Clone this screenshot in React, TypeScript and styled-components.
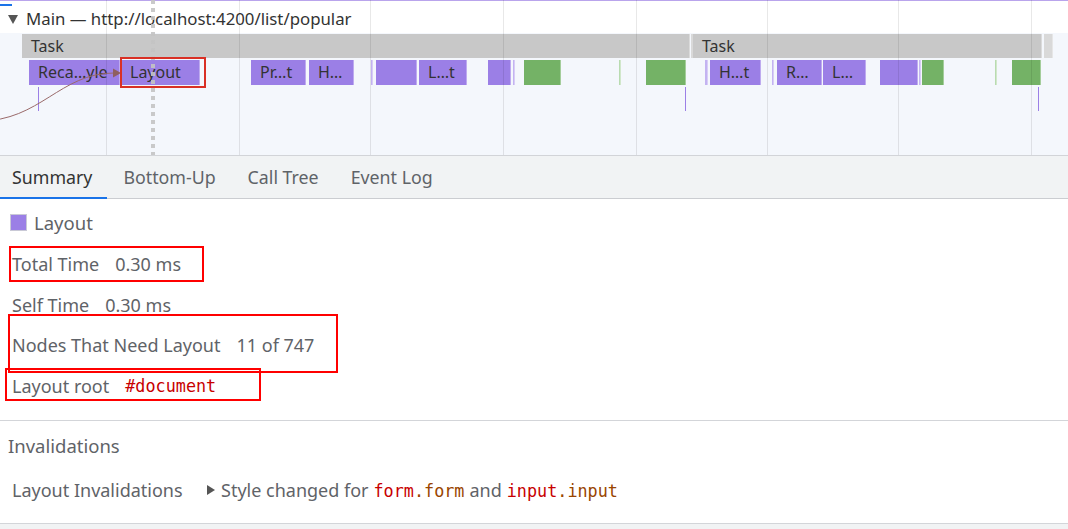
import React from 'react';
import styled, { createGlobalStyle } from 'styled-components';

const PURPLE = '#9b7fe6';
const PURPLE_LIGHT = '#c3b3f1';
const GREEN = '#74b266';
const GREEN_LIGHT = '#b8dbb0';

type Slice = { left: number; width: number; color: string; label?: string };

const slices: Slice[] = [
  { left: 29, width: 91, color: PURPLE, label: 'Reca…yle' },
  { left: 121, width: 79, color: PURPLE, label: 'Layout' },
  { left: 251, width: 55, color: PURPLE, label: 'Pr…t' },
  { left: 309, width: 45, color: PURPLE, label: 'H…' },
  { left: 371, width: 2, color: PURPLE_LIGHT },
  { left: 376, width: 41, color: PURPLE },
  { left: 419, width: 48, color: PURPLE, label: 'L…t' },
  { left: 488, width: 23, color: PURPLE },
  { left: 513, width: 2, color: PURPLE_LIGHT },
  { left: 524, width: 37, color: GREEN },
  { left: 619, width: 2, color: GREEN_LIGHT },
  { left: 646, width: 40, color: GREEN },
  { left: 705, width: 3, color: PURPLE_LIGHT },
  { left: 710, width: 51, color: PURPLE, label: 'H…t' },
  { left: 772, width: 2, color: PURPLE_LIGHT },
  { left: 777, width: 45, color: PURPLE, label: 'R…' },
  { left: 823, width: 43, color: PURPLE, label: 'L…' },
  { left: 880, width: 38, color: PURPLE },
  { left: 919, width: 2, color: PURPLE_LIGHT },
  { left: 922, width: 22, color: GREEN },
  { left: 995, width: 2, color: GREEN_LIGHT },
  { left: 1012, width: 29, color: GREEN },
];

const tasks = [
  { left: 22, width: 668, label: 'Task' },
  { left: 691, width: 1 },
  { left: 693, width: 349, label: 'Task' },
  { left: 1044, width: 2 },
];

const gridLines = [106, 239, 370, 503, 636, 767, 898, 1031];
const ticks = [38, 685, 1038];

const GlobalStyle = createGlobalStyle`
  html, body {
    margin: 0;
    padding: 0;
    background: #ffffff;
  }
  body {
    font-family: 'Noto Sans', 'Open Sans', sans-serif;
    color: #5f6368;
    width: 1068px;
    height: 529px;
    overflow: hidden;
  }
`;

const Page = styled.div`
  display: flex;
  flex-direction: column;
  height: 529px;
  background: #f1f3f4;
`;

const Timeline = styled.div`
  position: relative;
  flex: none;
  height: 155px;
  background: #f4f7fc;
  border-bottom: 1px solid #d2d4d8;
  overflow: hidden;
`;

const TrackHeader = styled.div`
  display: flex;
  align-items: center;
  gap: 8px;
  height: 33px;
  padding: 2px 0 0 8px;
  box-sizing: border-box;
  background: #ffffff;
  border-top: 1px solid #b9a4ec;
  font-size: 16.8px;
  color: #333333;
`;

const Caret = styled.span`
  width: 0;
  height: 0;
  border-left: 5px solid transparent;
  border-right: 5px solid transparent;
  border-top: 9px solid #555555;
  margin-top: 2px;
`;

const ScrollMark = styled.div`
  position: absolute;
  left: 0;
  top: 4px;
  width: 12px;
  height: 2px;
  background: #1a73e8;
`;

const Bar = styled.div<{ $top: number; $bg: string }>`
  position: absolute;
  top: ${(p) => p.$top}px;
  height: 25px;
  background: ${(p) => p.$bg};
  box-shadow: inset -1px 0 0 rgba(255, 255, 255, 0.35);
  box-sizing: border-box;
  padding-left: 9px;
  font-size: 16px;
  line-height: 25px;
  color: #333333;
  white-space: nowrap;
  overflow: hidden;
`;

const GridLine = styled.div`
  position: absolute;
  top: 0;
  bottom: 0;
  width: 1px;
  background: rgba(0, 0, 0, 0.09);
  pointer-events: none;
`;

const Tick = styled.div`
  position: absolute;
  top: 87px;
  width: 1px;
  height: 24px;
  background: ${PURPLE};
`;

const CursorLine = styled.div`
  position: absolute;
  left: 151px;
  top: 0;
  bottom: 0;
  width: 4px;
  background: repeating-linear-gradient(
    to bottom,
    #c4c4c4 0 4px,
    transparent 4px 8px
  );
  opacity: 0.9;
`;

const FlowArrow = styled.svg`
  position: absolute;
  left: 0;
  top: 0;
  overflow: visible;
`;

const Highlight = styled.div<{ $x: number; $y: number; $w: number; $h: number; $color?: string }>`
  position: absolute;
  left: ${(p) => p.$x}px;
  top: ${(p) => p.$y}px;
  width: ${(p) => p.$w}px;
  height: ${(p) => p.$h}px;
  border: 2px solid ${(p) => p.$color ?? '#ff0000'};
  box-sizing: border-box;
  pointer-events: none;
`;

const TabBar = styled.div`
  display: flex;
  flex: none;
  height: 43px;
  background: #f1f3f4;
  border-bottom: 1px solid #cbcdd1;
  box-sizing: border-box;
`;

const Tab = styled.div<{ $active?: boolean }>`
  display: flex;
  align-items: center;
  padding: 0 16px;
  font-size: 17.8px;
  color: ${(p) => (p.$active ? '#333333' : '#5f6368')};
  border-bottom: 2px solid ${(p) => (p.$active ? '#1a73e8' : 'transparent')};
  margin-bottom: -1px;
  &:first-child {
    padding-left: 12px;
    padding-right: 15px;
  }
`;

const Summary = styled.section`
  position: relative;
  flex: none;
  background: #ffffff;
  height: 222px;
  padding-top: 11px;
  box-sizing: border-box;
  border-bottom: 1px solid #d3d5d9;
`;

const Title = styled.div`
  display: flex;
  align-items: center;
  gap: 7px;
  height: 24px;
  padding-left: 10px;
  font-size: 18.5px;
  color: #5f6368;
  margin-bottom: 10px;
`;

const Swatch = styled.span`
  width: 17px;
  height: 17px;
  box-sizing: border-box;
  background: ${PURPLE};
  border: 1px solid #c9c9d6;
`;

const Row = styled.div`
  display: flex;
  align-items: center;
  gap: 16px;
  height: 40.6px;
  padding-left: 12px;
  font-size: 18px;
  color: #5f6368;
`;

const Mono = styled.span<{ $color?: string }>`
  font-family: 'DejaVu Sans Mono', 'Liberation Mono', monospace;
  font-size: 16.8px;
  color: ${(p) => p.$color ?? '#c80000'};
`;

const Invalidations = styled.section`
  flex: none;
  background: #ffffff;
  height: 103px;
  padding-top: 13px;
  box-sizing: border-box;
  border-bottom: 1px solid #d3d5d9;
`;

const SectionTitle = styled.div`
  height: 24px;
  line-height: 24px;
  padding-left: 8px;
  font-size: 18.5px;
  color: #5f6368;
  margin-bottom: 20px;
`;

const InvalidationRow = styled.div`
  display: flex;
  align-items: center;
  height: 24px;
  padding-left: 12px;
  font-size: 18px;
  color: #5f6368;
`;

const InvalidationLabel = styled.span`
  width: 195px;
`;

const Disclosure = styled.span`
  width: 0;
  height: 0;
  border-top: 5px solid transparent;
  border-bottom: 5px solid transparent;
  border-left: 8px solid #555555;
  margin-right: 6px;
`;

const Desc = styled.span`
  display: flex;
  align-items: baseline;
  gap: 5px;
`;

export default function App() {
  return (
    <>
      <GlobalStyle />
      <Page>
        <Timeline>
          <TrackHeader>
            <Caret />
            <span>Main — http://localhost:4200/list/popular</span>
          </TrackHeader>
          <ScrollMark />
          {tasks.map((t, i) => (
            <Bar
              key={`t${i}`}
              $top={34}
              $bg={t.label ? '#c8c8c8' : '#d9d9d9'}
              style={{ left: t.left, width: t.width, height: 24, lineHeight: '24px' }}
            >
              {t.label}
            </Bar>
          ))}
          {slices.map((s, i) => (
            <Bar
              key={`s${i}`}
              $top={60}
              $bg={s.color}
              style={{ left: s.left, width: s.width, paddingLeft: s.label ? undefined : 0 }}
            >
              {s.label}
            </Bar>
          ))}
          {ticks.map((x) => (
            <Tick key={x} style={{ left: x }} />
          ))}
          <FlowArrow width="1068" height="155">
            <path d="M -20 121 C 40 121, 60 73, 114 73" fill="none" stroke="#9a6a6a" strokeWidth="1" />
            <polygon points="113,68.5 121,73 113,77.5" fill="#8f5f5f" />
          </FlowArrow>
          {gridLines.map((x) => (
            <GridLine key={x} style={{ left: x }} />
          ))}
          <CursorLine />
          <Highlight $x={120} $y={57} $w={86} $h={31} $color="#d93025" />
        </Timeline>

        <TabBar>
          <Tab $active>Summary</Tab>
          <Tab>Bottom-Up</Tab>
          <Tab>Call Tree</Tab>
          <Tab>Event Log</Tab>
        </TabBar>

        <Summary>
          <Title>
            <Swatch />
            Layout
          </Title>
          <Row>
            <span>Total Time</span>
            <span>0.30 ms</span>
          </Row>
          <Row>
            <span>Self Time</span>
            <span>0.30 ms</span>
          </Row>
          <Row>
            <span>Nodes That Need Layout</span>
            <span>11 of 747</span>
          </Row>
          <Row>
            <span>Layout root</span>
            <Mono>#document</Mono>
          </Row>
          <Highlight $x={9} $y={47} $w={195} $h={36} />
          <Highlight $x={8} $y={115} $w={330} $h={59} />
          <Highlight $x={5} $y={169} $w={256} $h={33} />
        </Summary>

        <Invalidations>
          <SectionTitle>Invalidations</SectionTitle>
          <InvalidationRow>
            <InvalidationLabel>Layout Invalidations</InvalidationLabel>
            <Disclosure />
            <Desc>
              <span>Style changed for</span>
              <span>
                <Mono>form</Mono>
                <Mono $color="#994500">.form</Mono>
              </span>
              <span>and</span>
              <span>
                <Mono>input</Mono>
                <Mono $color="#994500">.input</Mono>
              </span>
            </Desc>
          </InvalidationRow>
        </Invalidations>
      </Page>
    </>
  );
}
